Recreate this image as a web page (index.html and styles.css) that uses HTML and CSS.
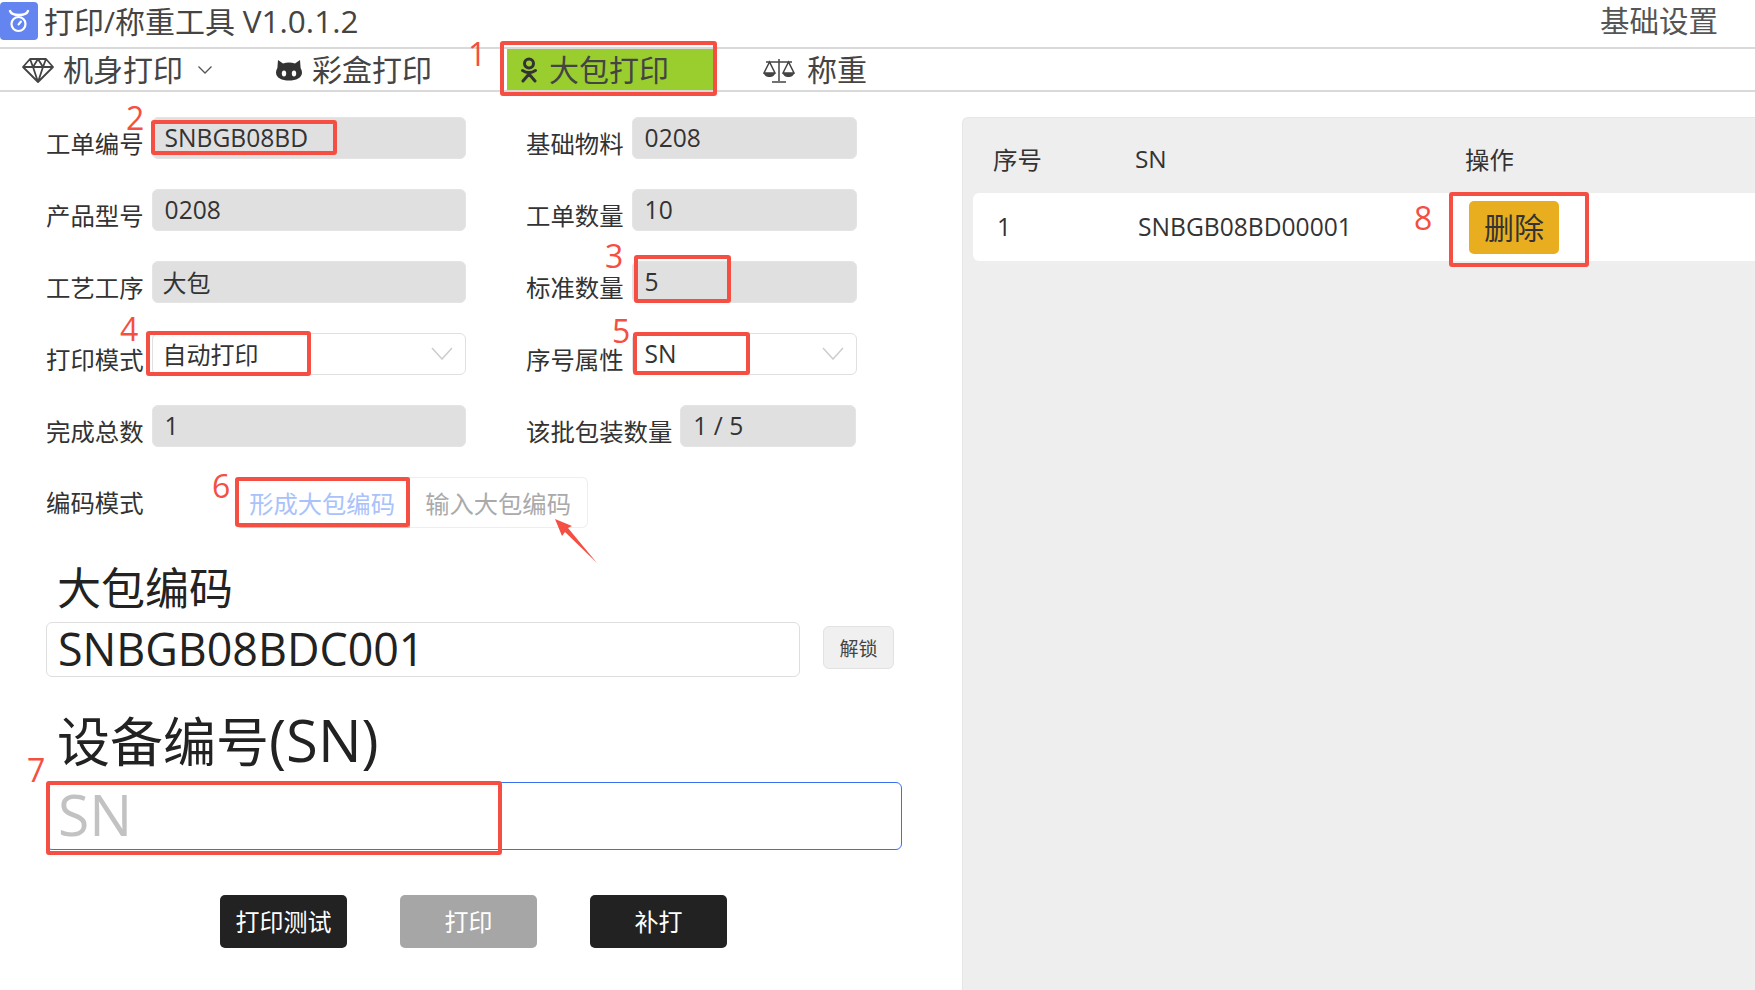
FILE: index.html
```html
<!DOCTYPE html>
<html lang="zh">
<head>
<meta charset="utf-8">
<title>打印/称重工具</title>
<link rel="stylesheet" href="styles.css">
</head>
<body>
<div class="page">
  <header class="titlebar">
    <div class="brand">
      <span class="logo">
        <svg viewBox="0 0 38 38" width="38" height="38"><rect width="38" height="38" rx="4" fill="#6485f0"/><path d="M10 9c1 2.500 4.500 4 9 4s8-1.500 9-4" fill="none" stroke="#fff" stroke-width="2.400" stroke-linecap="round"/><circle cx="18.500" cy="22" r="7" fill="none" stroke="#fff" stroke-width="2.200"/><path d="M18.500 22.500l2.500-3" stroke="#fff" stroke-width="2" stroke-linecap="round"/></svg>
      </span>
      <span class="app-name">打印/称重工具 <span class="ver">V1.0.1.2</span></span>
    </div>
    <span class="settings">基础设置</span>
  </header>

  <nav class="tabs">
    <div class="tab tab-body">
      <svg class="ic-diamond" viewBox="0 0 32 26" width="32" height="26"><path d="M8 2h16l7 8-15 15L1 10zM1 10h30M11 10l5 15 5-15M8 2l3 8 5-8 5 8 3-8" fill="none" stroke="#444" stroke-width="1.800" stroke-linejoin="round"/></svg>
      <span>机身打印</span>
      <svg class="ic-chev" viewBox="0 0 16 10" width="16" height="10"><path d="M1.500 1.500L8 8l6.500-6.500" fill="none" stroke="#555" stroke-width="1.300"/></svg>
    </div>
    <div class="tab tab-box">
      <svg class="ic-cat" viewBox="0 0 26 22" width="26" height="22"><path d="M2 1l5 3.500c2-.6 4-.9 6-.9s4 .3 6 .9L24 1l.6 8c.9 1.500 1.400 3 1.400 4.500 0 5.500-6 8-13 8s-13-2.500-13-8C0 12 .5 10.500 1.400 9z" fill="#333"/><ellipse cx="8" cy="14.500" rx="2.200" ry="3" fill="#fff"/><ellipse cx="18" cy="14.500" rx="2.200" ry="3" fill="#fff"/></svg>
      <span>彩盒打印</span>
    </div>
    <div class="tab tab-pack">
      <svg class="ic-ok" viewBox="0 0 18 26" width="18" height="26"><circle cx="9" cy="6.500" r="4.500" fill="none" stroke="#333" stroke-width="3"/><path d="M2.500 13.500c4 2.600 9 2.600 13 0M9 15.500v1.500M9 17L3 24M9 17l6 7" fill="none" stroke="#333" stroke-width="3" stroke-linecap="round"/></svg>
      <span>大包打印</span>
    </div>
    <div class="tab tab-weigh">
      <svg class="ic-scale" viewBox="0 0 32 26" width="32" height="26"><path d="M16 2v22M9 25h14M3 5h26M6.500 5L1 16h11zM25.500 5L20 16h11z" fill="none" stroke="#444" stroke-width="1.500"/><path d="M1 16h11c0 2.500-2.500 4-5.500 4S1 18.500 1 16zM20 16h11c0 2.500-2.500 4-5.500 4S20 18.500 20 16z" fill="#444"/></svg>
      <span>称重</span>
    </div>
  </nav>

  <main class="content">
    <section class="form">
      <div class="row">
        <div class="pair pair-a"><label class="lbl">工单编号</label><input class="field ro" readonly value="SNBGB08BD"></div>
        <div class="pair pair-b"><label class="lbl">基础物料</label><input class="field ro" readonly value="0208"></div>
      </div>
      <div class="row">
        <div class="pair pair-a"><label class="lbl">产品型号</label><input class="field ro" readonly value="0208"></div>
        <div class="pair pair-b"><label class="lbl">工单数量</label><input class="field ro" readonly value="10"></div>
      </div>
      <div class="row">
        <div class="pair pair-a"><label class="lbl">工艺工序</label><input class="field ro cjk" readonly value="大包"></div>
        <div class="pair pair-b"><label class="lbl">标准数量</label><input class="field ro" readonly value="5"></div>
      </div>
      <div class="row">
        <div class="pair pair-a"><label class="lbl">打印模式</label>
          <div class="field select cjk"><span>自动打印</span><svg viewBox="0 0 22 13" width="22" height="13"><path d="M1 1l10 11L21 1" fill="none" stroke="#ccc" stroke-width="1.500"/></svg></div></div>
        <div class="pair pair-b"><label class="lbl">序号属性</label>
          <div class="field select"><span>SN</span><svg viewBox="0 0 22 13" width="22" height="13"><path d="M1 1l10 11L21 1" fill="none" stroke="#ccc" stroke-width="1.500"/></svg></div></div>
      </div>
      <div class="row">
        <div class="pair pair-a"><label class="lbl">完成总数</label><input class="field ro" readonly value="1"></div>
        <div class="pair pair-b pair-wide"><label class="lbl">该批包装数量</label><input class="field ro" readonly value="1 / 5"></div>
      </div>
      <div class="row row-mode">
        <label class="lbl lbl-mode">编码模式</label>
        <div class="segment"><span class="seg seg-on">形成大包编码</span><span class="seg seg-off">输入大包编码</span></div>
      </div>

      <h2 class="big-title t-pack">大包编码</h2>
      <div class="pack-line">
        <input class="big-input pack-input" readonly value="SNBGB08BDC001">
        <button class="unlock">解锁</button>
      </div>

      <h2 class="big-title t-sn">设备编号<span class="sn-latin">(SN)</span></h2>
      <input class="big-input sn-input" placeholder="SN">

      <div class="actions">
        <button class="act act-test">打印测试</button>
        <button class="act act-print">打印</button>
        <button class="act act-re">补打</button>
      </div>
    </section>

    <aside class="panel">
      <div class="thead"><span class="c1">序号</span><span class="c2">SN</span><span class="c3">操作</span></div>
      <div class="trow"><span class="c1 v1">1</span><span class="c2 v2">SNBGB08BD00001</span><span class="c3 v3"><button class="del">删除</button></span></div>
    </aside>
  </main>

  <div class="box box1"></div><span class="num num1">1</span>
  <div class="box box2"></div><span class="num num2">2</span>
  <div class="box box3"></div><span class="num num3">3</span>
  <div class="box box4"></div><span class="num num4">4</span>
  <div class="box box5"></div><span class="num num5">5</span>
  <div class="box box6"></div><span class="num num6">6</span>
  <div class="box box7"></div><span class="num num7">7</span>
  <div class="box box8"></div><span class="num num8">8</span>
  <svg class="arrow" viewBox="0 0 50 46" width="50" height="46"><path d="M3 1l17 7-4 2 29 35-32-31-3 4z" fill="#f44f42"/></svg>
</div>
</body>
</html>
```
FILE: styles.css
```css
* { box-sizing: border-box; }
html, body { margin: 0; padding: 0; background: #fff; }
body { font-family: "Open Sans", "Noto Sans CJK SC", sans-serif; color: #333; }
.page { position: relative; width: 1755px; height: 990px; overflow: hidden; background: #fff; }

.titlebar { height: 49px; display: flex; justify-content: space-between; padding: 2px 37px 0 0; border-bottom: 2px solid #d9d9d9; }
.brand { display: flex; align-items: flex-start; gap: 6px; }
.logo { display: block; height: 38px; }
.logo svg { display: block; }
.app-name { font-size: 30px; line-height: 38px; color: #444; }
.ver { font-size: 31.500px; }
.settings { font-size: 29.500px; line-height: 38px; color: #555; }

.tabs { height: 43px; display: flex; align-items: stretch; border-bottom: 2px solid #d9d9d9; font-size: 30px; color: #444; }
.tab { display: flex; align-items: center; line-height: 41px; }
.tab-body { padding-left: 22px; width: 260px; }
.ic-diamond { margin-right: 9px; }
.ic-chev { margin-left: 14px; }
.tab-box { padding-left: 16px; width: 247px; }
.ic-cat { margin-right: 10px; }
.tab-pack { width: 206px; padding-left: 13px; background: #9ace2f; }
.ic-ok { margin-right: 11px; }
.tab-weigh { padding-left: 50px; }
.ic-scale { margin-right: 12px; }

.content { display: flex; padding-top: 25px; height: 899px; }
.form { width: 962px; padding-left: 46px; flex: none; }
.row { display: flex; height: 41px; margin-bottom: 31px; }
.pair { display: flex; align-items: flex-start; }
.pair-a { width: 480px; }
.lbl { font-size: 24.400px; line-height: 41px; margin-top: 6px; color: #333; white-space: nowrap; }
.field { height: 42px; border-radius: 6px; font: inherit; font-size: 24.600px; color: #333; padding: 0 12px 1px; }
.cjk { font-size: 24px; padding-left: 10px; }
.pair-a .field { width: 314px; margin-left: 8px; }
.pair-b .field { width: 225px; margin-left: 8px; }
.pair-wide .field { width: 176px; margin-left: 8px; }
input.field { display: block; outline: none; }
.ro { background: #e0e0e0; border: 1px solid #e4e4e4; }
.select { background: #fff; border: 1px solid #e0e0e0; display: flex; align-items: center; justify-content: space-between; padding-right: 12px; }

.row-mode { height: 51px; margin-bottom: 0; align-items: flex-start; }
.lbl-mode { margin-top: 5px; }
.segment { display: flex; margin-left: 91px; height: 51px; font-size: 24.300px; }
.seg { display: flex; align-items: center; justify-content: center; height: 51px; }
.seg-on { width: 175px; color: #a9c2fb; border: 1px solid #a8c4ff; border-radius: 6px 0 0 6px; }
.seg-off { width: 178px; color: #aaa; border: 1px solid #eee; border-left: 0; border-radius: 0 6px 6px 0; }

.big-title { margin: 0; font-weight: 400; color: #222; white-space: nowrap; }
.t-pack { font-size: 44px; line-height: 60px; margin: 30px 0 0 11px; }
.pack-line { display: flex; align-items: flex-start; margin-top: 4px; height: 55px; }
.big-input { display: block; font: inherit; color: #222; background: #fff; outline: none; }
.pack-input { width: 754px; height: 55px; border: 1px solid #dedede; border-radius: 6px; font-size: 44.800px; padding: 0 11px 2px; }
.unlock { width: 71px; height: 43px; margin: 4px 0 0 23px; background: #f0f0f0; border: 1px solid #e2e2e2; border-radius: 6px; font: inherit; font-size: 19px; color: #444; padding: 0; }
.t-sn { font-size: 53px; line-height: 72px; margin: 27px 0 0 11px; }
.sn-latin { font-size: 58px; }
.sn-input { width: 856px; height: 68px; border: 1px solid #3a6ff0; border-radius: 6px; font-size: 57px; padding: 0 11px 4px; margin-top: 4px; }
.sn-input::placeholder { color: #c2c2c2; opacity: 1; }

.actions { display: flex; margin-top: 45px; padding-left: 174px; }
.act { height: 53px; border: 0; border-radius: 5px; font: inherit; font-size: 24px; color: #fff; padding: 0 0 2px; }
.act-test { width: 127px; background: #222; }
.act-print { width: 137px; margin-left: 53px; background: #a6a6a6; }
.act-re { width: 137px; margin-left: 53px; background: #222; }

.panel { flex: 1; background: #eee; border: 1px solid #e6e6e6; border-right: 0; border-radius: 6px 0 0 0; padding: 0 0 0 10px; }
.thead { display: flex; height: 75px; align-items: center; font-size: 24.400px; color: #333; padding: 6px 0 0; }
.c1 { width: 162px; padding-left: 20px; flex: none; }
.c2 { width: 330px; flex: none; }
.trow { display: flex; align-items: center; height: 68px; background: #fff; border-radius: 6px 0 0 6px; font-size: 24.600px; padding-bottom: 2px; }
.v1 { padding-left: 24px; }
.v2 { width: 331px; padding-left: 3px; }
.c3 { flex: none; }
.v3 { padding-left: 0; }
.del { display: block; width: 90px; height: 53px; margin: 2px 0 0 3px; background: #e9ae1f; border: 0; border-radius: 5px; font: inherit; font-size: 30px; color: #333; padding: 0 0 3px; }

.box { position: absolute; border: 4px solid #f44f42; border-radius: 3px; }
.box1 { left: 500px; top: 41px; width: 217px; height: 55px; }
.box2 { left: 151px; top: 120px; width: 186px; height: 35px; }
.box3 { left: 634px; top: 255px; width: 97px; height: 48px; }
.box4 { left: 146px; top: 331px; width: 165px; height: 45px; }
.box5 { left: 633px; top: 332px; width: 117px; height: 43px; }
.box6 { left: 235px; top: 477px; width: 175px; height: 50px; }
.box7 { left: 46px; top: 781px; width: 456px; height: 74px; }
.box8 { left: 1449px; top: 192px; width: 140px; height: 75px; }

.num { position: absolute; font-family: "Open Sans", sans-serif; font-size: 32px; line-height: 32px; color: #f44f42; }
.num1 { left: 468px; top: 38px; }
.num2 { left: 126px; top: 102px; }
.num3 { left: 605px; top: 240px; }
.num4 { left: 120px; top: 313px; }
.num5 { left: 612px; top: 315px; }
.num6 { left: 212px; top: 470px; }
.num7 { left: 27px; top: 754px; }
.num8 { left: 1414px; top: 202px; }
.arrow { position: absolute; left: 552px; top: 518px; }
```
